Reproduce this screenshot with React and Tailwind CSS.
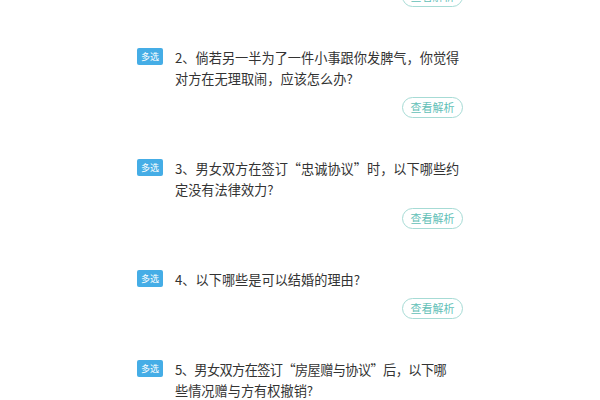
const questions = [
  { id: 2, lines: ['2、倘若另一半为了一件小事跟你发脾气，你觉得', '对方在无理取闹，应该怎么办?'] },
  { id: 3, lines: ['3、男女双方在签订“忠诚协议”时，以下哪些约', '定没有法律效力?'] },
  { id: 4, lines: ['4、以下哪些是可以结婚的理由?'] },
  { id: 5, lines: ['5、男女双方在签订“房屋赠与协议”后，以下哪', '些情况赠与方有权撤销?'], tight: true },
]

function AnalysisButton() {
  return (
    <div className="flex justify-end">
      <button className="h-[21px] w-[61px] rounded-full border border-[#a6dbd5] bg-white text-[11px] leading-none text-[#62bfb7]">
        查看解析
      </button>
    </div>
  )
}

function Question({ q }) {
  return (
    <div className="mb-[40px]">
      <div className="flex items-start">
        <span className="mt-[1px] flex h-[17px] w-[26px] shrink-0 items-center justify-center rounded-[2px] bg-[#45ade6] text-[9px] text-white">
          多选
        </span>
        <div className="ml-[12px] text-[13.2px] leading-[21px] text-[#333333]">
          {q.lines.map((line, i) => (
            <p
              key={i}
              className={`whitespace-nowrap ${q.tight && i === 0 ? 'tracking-[-0.6px]' : ''}`}
            >
              {line}
            </p>
          ))}
        </div>
      </div>
      <div className="mt-[8px]">
        <AnalysisButton />
      </div>
    </div>
  )
}

export default function App() {
  return (
    <div
      className="h-[400px] w-[600px] overflow-hidden bg-white"
      style={{ fontFamily: '"Noto Sans CJK SC", "Noto Sans", sans-serif' }}
    >
      <div className="mx-auto -mt-[14px] w-[326px]">
        <div className="mb-[40px]">
          <AnalysisButton />
        </div>
        {questions.map(q => (
          <Question key={q.id} q={q} />
        ))}
      </div>
    </div>
  )
}
